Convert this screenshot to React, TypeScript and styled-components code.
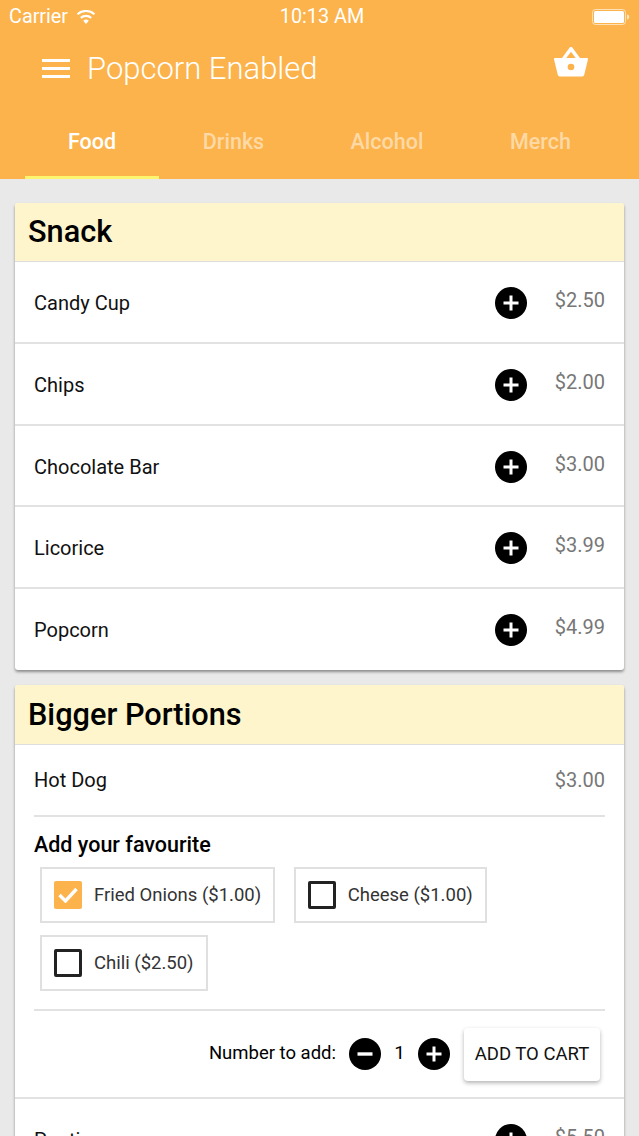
import React from "react";
import styled, { createGlobalStyle } from "styled-components";

const Global = createGlobalStyle`
  html, body { margin: 0; padding: 0; height: 1136px; overflow: hidden; background: #e9e9e9; }
  body { font-family: Roboto, "Liberation Sans", sans-serif; color: #000; }
  * { box-sizing: border-box; }
`;

const Page = styled.div`
  width: 639px;
  height: 1136px;
  overflow: hidden;
  background: #e9e9e9;
`;
const Header = styled.header`
  height: 179px;
  background: #fcb34c;
  color: #fff;
  display: flex;
  flex-direction: column;
`;
const StatusBar = styled.div`
  height: 33px;
  padding: 0 9px;
  display: grid;
  grid-template-columns: 1fr auto 1fr;
  align-items: center;
  font-size: 19.800px;
  font-weight: 400;
`;
const StatusLeft = styled.div`
  display: flex;
  align-items: center;
  gap: 8px;
`;
const Clock = styled.span`
  padding-left: 5px;
`;
const StatusRight = styled.div`
  display: flex;
  justify-content: flex-end;
`;
const TitleBar = styled.div`
  height: 70px;
  padding: 0 51px 0 42px;
  display: flex;
  align-items: center;
  gap: 17px;
`;
const Title = styled.h1`
  flex: 1;
  margin: 0;
  font-size: 31px;
  font-weight: 300;
`;
const BasketSlot = styled.div`
  margin-top: -12px;
`;
const Tabs = styled.nav`
  flex: 1;
  padding-left: 25px;
  display: flex;
`;
const Tab = styled.div<{ $active?: boolean; $w: number }>`
  width: ${(p) => p.$w}px;
  display: flex;
  align-items: center;
  justify-content: center;
  padding-top: 4px;
  font-size: 21.500px;
  font-weight: 500;
  color: ${(p) => (p.$active ? "#fff" : "rgba(255,255,255,0.5)")};
  border-bottom: 3px solid ${(p) => (p.$active ? "#fdf56e" : "transparent")};
`;
const Content = styled.main`
  padding: 24px 15px 0;
  display: flex;
  flex-direction: column;
  gap: 15.400px;
`;
const Card = styled.section`
  background: #fff;
  border-radius: 3px;
  box-shadow: 0 2px 3px rgba(0, 0, 0, 0.4);
`;
const CardHead = styled.h2`
  margin: 0;
  height: 59.400px;
  padding: 0 13px 1px;
  display: flex;
  align-items: center;
  background: #fef5cc;
  border-radius: 3px 3px 0 0;
  border-bottom: 1px solid #dedede;
  font-size: 30.700px;
  font-weight: 500;
`;
const Row = styled.div`
  height: 81.700px;
  padding: 2px 19px 0;
  display: flex;
  align-items: center;
  font-size: 20px;
  color: #111;
  border-bottom: 2px solid #e2e2e2;
  &:last-child { border-bottom: 0; height: 80.800px; padding-top: 1px; }
`;
const Name = styled.span`
  flex: 1;
`;
const Price = styled.span`
  width: 78px;
  text-align: right;
  color: #777;
  font-size: 20px;
  margin-top: -6px;
`;
const Round = styled.svg`
  width: 32px;
  height: 32px;
  display: block;
  flex: none;
`;
const Expanded = styled.div`
  border-bottom: 2px solid #e2e2e2;
`;
const ExpandedBody = styled.div`
  margin: 0 19px;
`;
const HotDog = styled.div`
  height: 72px;
  padding-top: 1px;
  display: flex;
  justify-content: space-between;
  align-items: center;
  font-size: 20px;
  color: #111;
  border-bottom: 2px solid #e2e2e2;
`;
const PlainPrice = styled.span`
  color: #777;
`;
const Subhead = styled.h3`
  margin: 0;
  padding-top: 14.400px;
  height: 50.400px;
  font-size: 21.500px;
  line-height: 28px;
  font-weight: 500;
`;
const Chips = styled.div`
  padding: 0 0 18px 6px;
  display: flex;
  flex-wrap: wrap;
  gap: 12px 18.500px;
  border-bottom: 2px solid #e2e2e2;
`;
const Chip = styled.label`
  height: 56px;
  padding: 0 12px;
  display: flex;
  align-items: center;
  gap: 12px;
  border: 2px solid #e0e0e0;
  font-size: 18.500px;
  color: #333;
`;
const Box = styled.span<{ $checked?: boolean }>`
  width: 28px;
  height: 28px;
  border-radius: 2px;
  display: flex;
  align-items: center;
  justify-content: center;
  background: ${(p) => (p.$checked ? "#fcb34c" : "#fff")};
  border: ${(p) => (p.$checked ? "0" : "3px solid #222")};
`;
const AddRow = styled.div`
  height: 86px;
  margin-right: 5px;
  display: flex;
  justify-content: flex-end;
  align-items: center;
  font-size: 18.500px;
`;
const Count = styled.span`
  width: 37px;
  text-align: center;
  margin-top: -3px;
  font-size: 19px;
`;
const NumberLabel = styled.span`
  margin-right: 13px;
  margin-top: -3px;
`;
const CartButton = styled.button`
  margin-left: 14px;
  width: 136px;
  height: 53px;
  border: 0;
  border-radius: 4px;
  background: #fff;
  font: 400 18.500px Roboto, sans-serif;
  color: #111;
  box-shadow: 0 2px 4px rgba(0, 0, 0, 0.3);
`;

const PlusIcon = () => (
  <Round viewBox="0 0 32 32">
    <circle cx="16" cy="16" r="16" fill="#000" />
    <path d="M16 8.500v15M8.500 16h15" stroke="#fff" strokeWidth="3" />
  </Round>
);
const MinusIcon = () => (
  <Round viewBox="0 0 32 32">
    <circle cx="16" cy="16" r="16" fill="#000" />
    <path d="M8.500 16h15" stroke="#fff" strokeWidth="3.400" />
  </Round>
);

const Item = ({ name, price }: { name: string; price: string }) => (
  <Row>
    <Name>{name}</Name>
    <PlusIcon />
    <Price>{price}</Price>
  </Row>
);

const Wifi = () => (
  <svg width="20" height="14" viewBox="0 0 20 14">
    <path d="M10 14l-2.800-3.300a4.400 4.400 0 0 1 5.600 0z" fill="#fff" />
    <path d="M4.800 7.800a8 8 0 0 1 10.400 0M1.500 4.200a12.800 12.800 0 0 1 17 0" stroke="#fff" strokeWidth="2.200" fill="none" />
  </svg>
);
const Battery = () => (
  <svg width="38" height="16" viewBox="0 0 38 16">
    <rect x="0.500" y="0.500" width="33" height="15" rx="3" fill="none" stroke="#fff" strokeOpacity="0.6" />
    <rect x="2" y="2" width="30" height="12" rx="1.500" fill="#fff" />
    <path d="M35 5.500c1.500.3 2.200 1.200 2.200 2.500S36.500 10.200 35 10.500z" fill="#fff" fillOpacity="0.7" />
  </svg>
);
const Menu = () => (
  <svg width="28" height="19" viewBox="0 0 28 19">
    <path d="M0 1.500h28M0 9.500h28M0 17.500h28" stroke="#fff" strokeWidth="3" />
  </svg>
);
const Basket = () => (
  <svg width="34" height="30" viewBox="0 0 34 30" style={{ display: "block" }}>
    <path
      fillRule="evenodd"
      fill="#fff"
      d="M1 11h7L15.500 .8a1.900 1.900 0 0 1 3 0L26 11h7a1 1 0 0 1 1 1.200L30.200 28a2 2 0 0 1-1.900 1.500H5.700A2 2 0 0 1 3.800 28L0 12.200A1 1 0 0 1 1 11zM12.300 11h9.400L17 4.800zM17 16.700a3.300 3.300 0 1 0 0 6.600a3.300 3.300 0 0 0 0-6.600z"
    />
  </svg>
);
const Check = () => (
  <svg width="20" height="16" viewBox="0 0 20 16">
    <path d="M1.500 8l6 6L18.500 2" stroke="#fff" strokeWidth="3.400" fill="none" />
  </svg>
);

export default function App() {
  return (
    <Page>
      <Global />
      <Header>
        <StatusBar>
          <StatusLeft>
            <span>Carrier</span>
            <Wifi />
          </StatusLeft>
          <Clock>10:13 AM</Clock>
          <StatusRight>
            <Battery />
          </StatusRight>
        </StatusBar>
        <TitleBar>
          <Menu />
          <Title>Popcorn Enabled</Title>
          <BasketSlot>
            <Basket />
          </BasketSlot>
        </TitleBar>
        <Tabs>
          <Tab $active $w={134}>Food</Tab>
          <Tab $w={149}>Drinks</Tab>
          <Tab $w={158}>Alcohol</Tab>
          <Tab $w={149}>Merch</Tab>
        </Tabs>
      </Header>
      <Content>
        <Card>
          <CardHead>Snack</CardHead>
          <Item name="Candy Cup" price="$2.50" />
          <Item name="Chips" price="$2.00" />
          <Item name="Chocolate Bar" price="$3.00" />
          <Item name="Licorice" price="$3.99" />
          <Item name="Popcorn" price="$4.99" />
        </Card>
        <Card>
          <CardHead>Bigger Portions</CardHead>
          <Expanded>
            <ExpandedBody>
              <HotDog>
                <span>Hot Dog</span>
                <PlainPrice>$3.00</PlainPrice>
              </HotDog>
              <Subhead>Add your favourite</Subhead>
              <Chips>
                <Chip>
                  <Box $checked>
                    <Check />
                  </Box>
                  Fried Onions ($1.00)
                </Chip>
                <Chip>
                  <Box />
                  Cheese ($1.00)
                </Chip>
                <Chip>
                  <Box />
                  Chili ($2.50)
                </Chip>
              </Chips>
              <AddRow>
                <NumberLabel>Number to add:</NumberLabel>
                <MinusIcon />
                <Count>1</Count>
                <PlusIcon />
                <CartButton>ADD TO CART</CartButton>
              </AddRow>
            </ExpandedBody>
          </Expanded>
          <Item name="Poutine" price="$5.50" />
        </Card>
      </Content>
    </Page>
  );
}
